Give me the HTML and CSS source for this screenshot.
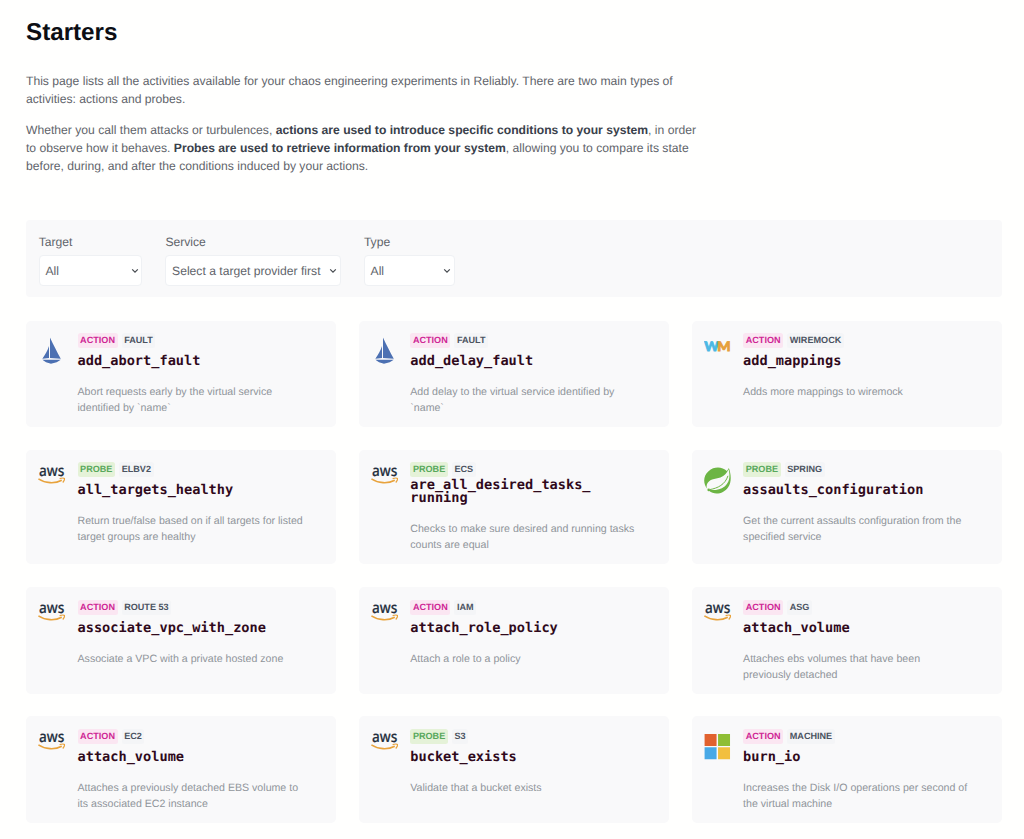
FILE: index.html
```
<!DOCTYPE html>
<html lang="en">
<head>
<meta charset="utf-8">
<title>Starters</title>
<link rel="stylesheet" href="styles.css">
</head>
<body>
<svg class="sprite" aria-hidden="true">
  <symbol id="istio" viewBox="0 0 28 28">
    <path fill="#4c70b2" d="M4.400 22.200 11.200 21.400V9.200C9.600 14 7.600 17.800 4.400 22.200ZM12.200.4V21.400L23.200 22.200C19.500 15 15.600 8 12.200.4ZM4.400 23.200 23.200 23.200 19 25.600 13.200 27.200 8.200 25.600Z"/>
  </symbol>
  <symbol id="aws" viewBox="0 0 28 28">
    <text class="aws-word" x="1" y="8.800" textLength="25.800" lengthAdjust="spacingAndGlyphs">aws</text>
    <path fill="none" stroke="#e8a33d" stroke-width="1.600" d="M.4 12C7.600 16.800 17 17.200 24.200 13.500"/>
    <path fill="none" stroke="#e8a33d" stroke-width="1.300" d="M22 11.800C24.200 11.200 26.400 11.100 26.900 11.700S26.400 14.600 25.200 15.800"/>
  </symbol>
  <symbol id="wiremock" viewBox="0 0 28 28">
    <text class="wm-word" x=".2" y="14.300" fill="#4cb8e4" stroke="#4cb8e4" textLength="15" lengthAdjust="spacingAndGlyphs">W</text>
    <text class="wm-word" x="13.600" y="14.300" fill="#e6a03c" stroke="#e6a03c" textLength="13.600" lengthAdjust="spacingAndGlyphs">M</text>
  </symbol>
  <symbol id="spring" viewBox="0 0 28 28">
    <path fill="#6cb544" d="M3.600 22.400C-1.200 17-1 9 4.600 4.200 10.400-.8 18.600-.4 23.200 4.100 24.200 3.200 24.800 2.300 25.300 1.100 27.400 6.600 28.500 15 24.600 20.600 19.800 27.800 10.400 28.800 5.200 24.300Z"/>
    <path fill="#f9f9fa" d="M2.800 21.800C1.800 15.500 6.500 12.600 12.500 11.800 18.800 11 22.800 7.600 25 2.400 27.200 10.500 25.500 16.200 21 19.800 16.500 23.200 10.500 24 5.400 23.300Z"/>
    <path fill="none" stroke="#6cb544" stroke-width="1" d="M6 23C14 21.500 21.500 18 24.400 9"/>
    <circle cx="4.800" cy="23.300" r="1.300" fill="#6cb544"/>
  </symbol>
  <symbol id="microsoft" viewBox="0 0 28 28">
    <path fill="#e1622f" d="M.6 1h12.200v12.200H.6z"/><path fill="#8fbe35" d="M14.300 1h12.200v12.200h-12.200z"/>
    <path fill="#48a9e6" d="M.6 14.600h12.200v12.200H.6z"/><path fill="#f2bf3f" d="M14.300 14.600h12.200v12.200h-12.200z"/>
  </symbol>
  <symbol id="chevron" viewBox="0 0 8 6">
    <path fill="none" stroke="#45494f" stroke-width="1.200" d="M1.200 1.400 4 4.200 6.800 1.400"/>
  </symbol>
</svg>

<main class="page">
  <h1 class="page-title">Starters</h1>
  <div class="intro">
    <p>This page lists all the activities available for your chaos engineering experiments in Reliably. There are two main types of<br>activities: actions and probes.</p>
    <p>Whether you call them attacks or turbulences, <strong>actions are used to introduce specific conditions to your system</strong>, in order<br>to observe how it behaves. <strong>Probes are used to retrieve information from your system</strong>, allowing you to compare its state<br>before, during, and after the conditions induced by your actions.</p>
  </div>

  <form class="filters">
    <div class="field field-target"><label>Target</label><div class="select"><span>All</span><svg><use href="#chevron"/></svg></div></div>
    <div class="field field-service"><label>Service</label><div class="select"><span>Select a target provider first</span><svg><use href="#chevron"/></svg></div></div>
    <div class="field field-type"><label>Type</label><div class="select"><span>All</span><svg><use href="#chevron"/></svg></div></div>
  </form>

  <section class="cards">
    <article class="card"><svg class="logo"><use href="#istio"/></svg><div class="body"><div class="tags"><span class="tag action">ACTION</span><span class="tag">FAULT</span></div><h2 class="name">add_abort_fault</h2><p class="desc">Abort requests early by the virtual service<br>identified by `name`</p></div></article>
    <article class="card"><svg class="logo"><use href="#istio"/></svg><div class="body"><div class="tags"><span class="tag action">ACTION</span><span class="tag">FAULT</span></div><h2 class="name">add_delay_fault</h2><p class="desc">Add delay to the virtual service identified by<br>`name`</p></div></article>
    <article class="card"><svg class="logo"><use href="#wiremock"/></svg><div class="body"><div class="tags"><span class="tag action">ACTION</span><span class="tag">WIREMOCK</span></div><h2 class="name">add_mappings</h2><p class="desc">Adds more mappings to wiremock</p></div></article>

    <article class="card"><svg class="logo"><use href="#aws"/></svg><div class="body"><div class="tags"><span class="tag probe">PROBE</span><span class="tag">ELBV2</span></div><h2 class="name">all_targets_healthy</h2><p class="desc">Return true/false based on if all targets for listed<br>target groups are healthy</p></div></article>
    <article class="card"><svg class="logo"><use href="#aws"/></svg><div class="body"><div class="tags"><span class="tag probe">PROBE</span><span class="tag">ECS</span></div><h2 class="name">are_all_desired_tasks_<br>running</h2><p class="desc">Checks to make sure desired and running tasks<br>counts are equal</p></div></article>
    <article class="card"><svg class="logo"><use href="#spring"/></svg><div class="body"><div class="tags"><span class="tag probe">PROBE</span><span class="tag">SPRING</span></div><h2 class="name">assaults_configuration</h2><p class="desc">Get the current assaults configuration from the<br>specified service</p></div></article>

    <article class="card"><svg class="logo"><use href="#aws"/></svg><div class="body"><div class="tags"><span class="tag action">ACTION</span><span class="tag">ROUTE 53</span></div><h2 class="name">associate_vpc_with_zone</h2><p class="desc">Associate a VPC with a private hosted zone</p></div></article>
    <article class="card"><svg class="logo"><use href="#aws"/></svg><div class="body"><div class="tags"><span class="tag action">ACTION</span><span class="tag">IAM</span></div><h2 class="name">attach_role_policy</h2><p class="desc">Attach a role to a policy</p></div></article>
    <article class="card"><svg class="logo"><use href="#aws"/></svg><div class="body"><div class="tags"><span class="tag action">ACTION</span><span class="tag">ASG</span></div><h2 class="name">attach_volume</h2><p class="desc">Attaches ebs volumes that have been<br>previously detached</p></div></article>

    <article class="card"><svg class="logo"><use href="#aws"/></svg><div class="body"><div class="tags"><span class="tag action">ACTION</span><span class="tag">EC2</span></div><h2 class="name">attach_volume</h2><p class="desc">Attaches a previously detached EBS volume to<br>its associated EC2 instance</p></div></article>
    <article class="card"><svg class="logo"><use href="#aws"/></svg><div class="body"><div class="tags"><span class="tag probe">PROBE</span><span class="tag">S3</span></div><h2 class="name">bucket_exists</h2><p class="desc">Validate that a bucket exists</p></div></article>
    <article class="card"><svg class="logo"><use href="#microsoft"/></svg><div class="body"><div class="tags"><span class="tag action">ACTION</span><span class="tag">MACHINE</span></div><h2 class="name">burn_io</h2><p class="desc">Increases the Disk I/O operations per second of<br>the virtual machine</p></div></article>
  </section>
</main>
</body>
</html>
```
FILE: styles.css
```
* { box-sizing: border-box; }
html { overflow: hidden; }
body {
  margin: 0;
  background: #fffffe;
  color: #5f646b;
  font-family: "Liberation Sans", Arial, sans-serif;
  font-size: 12.150px;
  line-height: 18.200px;
  text-rendering: geometricPrecision;
}
.sprite { display: none; }
.page { padding: 16.500px 22.300px 0 26px; }
.page-title { margin: 0; color: #0c0e14; font-size: 24.200px; line-height: 32px; font-weight: 700; }
.intro { margin-top: 23.700px; white-space: nowrap; }
.intro p { margin: 0 0 12.400px; }
.intro strong { color: #3a414b; }

.filters {
  display: flex;
  gap: 23px;
  height: 77.500px;
  margin: 44px 0 23.600px;
  padding: 13px 12.700px 0;
  border-radius: 4px;
  background: #f9f9fa;
}
.field label { display: block; height: 22px; }
.field-target { width: 103.700px; }
.field-service { width: 175.500px; }
.field-type { width: 91px; }
.select {
  display: flex;
  align-items: center;
  justify-content: space-between;
  height: 31px;
  padding: 2px 2.500px 0 5.700px;
  border: 1px solid #eff1f4;
  border-radius: 4px;
  background: #fff;
  white-space: nowrap;
}
.select svg { width: 8px; height: 6px; flex: none; }

.cards {
  display: grid;
  grid-template-columns: repeat(3, 1fr);
  gap: 22.700px;
}
.card {
  display: flex;
  gap: 12px;
  min-height: 106.500px;
  padding: 12.500px 12px 11.100px;
  border-radius: 5px;
  background: #f9f9fa;
}
.logo { width: 27.500px; height: 27.500px; margin-top: 4.300px; flex: none; }
.aws-word { font: 500 15.500px "Noto Sans", sans-serif; fill: #252f3e; stroke: #252f3e; stroke-width: .2px; }
.wm-word { font: 900 13.500px Lato, sans-serif; stroke-width: .8px; }
.tags { display: flex; gap: 4px; height: 15px; }
.tag {
  padding: 0 2.600px;
  border-radius: 2.500px;
  background: #f4f5f7;
  color: #4b5361;
  font-size: 9.100px;
  line-height: 15.600px;
  font-weight: 700;
}
.action { background: #fbe6f2; color: #cf2795; }
.probe { background: #e5f2d8; color: #58a85c; }
.name {
  display: flex;
  align-items: flex-end;
  min-height: 19.700px;
  margin: 1.200px 0 0;
  color: #300a1c;
  font: 700 13.620px/13.900px "DejaVu Sans Mono", monospace;
}
.desc { margin: 15px 0 0; color: #90959b; font-size: 10.620px; line-height: 16px; white-space: nowrap; }
```
